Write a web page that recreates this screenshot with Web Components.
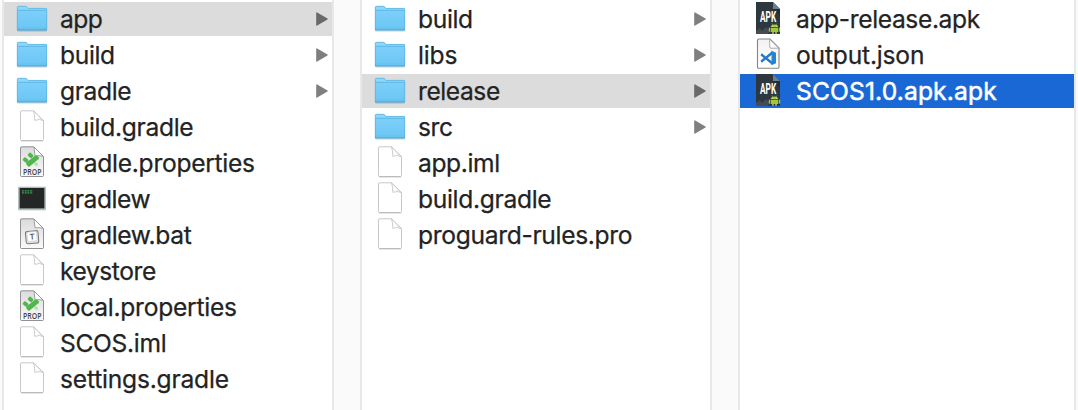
<!DOCTYPE html>
<html lang="en"><head><meta charset="utf-8"><title>Files</title>
<style>body{margin:0;background:#fafafa;height:410px;overflow:hidden}</style></head>
<body>
<file-browser>
<file-column style="width:328px">
<file-row icon="folder" state="parent" arrow w="42">app</file-row>
<file-row icon="folder" arrow w="54.5">build</file-row>
<file-row icon="folder" arrow w="71">gradle</file-row>
<file-row icon="doc" w="133">build.gradle</file-row>
<file-row icon="prop" w="194.5">gradle.properties</file-row>
<file-row icon="term" w="90">gradlew</file-row>
<file-row icon="bat" w="131">gradlew.bat</file-row>
<file-row icon="doc" w="95.5">keystore</file-row>
<file-row icon="prop" w="176.5">local.properties</file-row>
<file-row icon="doc" w="106">SCOS.iml</file-row>
<file-row icon="doc" w="168.5">settings.gradle</file-row>
</file-column>
<file-column style="width:348px">
<file-row icon="folder" arrow w="54.5">build</file-row>
<file-row icon="folder" arrow w="39">libs</file-row>
<file-row icon="folder" state="parent" arrow w="81.5">release</file-row>
<file-row icon="folder" arrow w="34.5">src</file-row>
<file-row icon="doc" w="81.5">app.iml</file-row>
<file-row icon="doc" w="133">build.gradle</file-row>
<file-row icon="doc" w="214">proguard-rules.pro</file-row>
</file-column>
<file-column style="width:334px">
<file-row icon="apk" w="183.5">app-release.apk</file-row>
<file-row icon="code" w="128">output.json</file-row>
<file-row icon="apk" state="selected" w="200.5">SCOS1.0.apk.apk</file-row>
</file-column>
</file-browser>
<script>
const page = '<path d="M4.5 2Q4.5.8 5.7.8H17.5L27.5 10.5V29.5Q27.5 30.5 26.5 30.5H5.5Q4.5 30.5 4.5 29.5Z"';
const ICONS = {
folder: `<defs><linearGradient id="g" x2="0" y2="1"><stop stop-color="#7ccffa"/><stop offset="1" stop-color="#6bc5f3"/></linearGradient></defs>
<path d="M1.5 29H30.5" stroke="#000" stroke-opacity=".2" stroke-width="1"/>
<path d="M1 5.5Q1 4 2.5 4H9.3Q10.3 4 11 5L12 6H29.8Q31 6 31 7.2V28H1Z" fill="#8dd7fb"/>
<path d="M1 9H31V28.2H1Z" fill="url(#g)"/>
<path d="M1.3 28V5.5Q1.3 4.3 2.5 4.3H9.3Q10.3 4.3 11 5.3L12 6.4H29.8Q30.7 6.4 30.7 7.2V28" fill="none" stroke="#58afdc" stroke-width=".7"/>
<path d="M1.5 8.3H30.5" stroke="#5cb6e4"/><path d="M2 26H30" stroke="#61bcea" stroke-width=".6"/><path d="M1 28H31" stroke="#4b9fcb"/>`,
doc: `<defs><linearGradient id="g" x1="0" y1="0" x2="1" y2="0"><stop offset=".4" stop-color="#fff"/><stop offset="1" stop-color="#e9e9e9"/></linearGradient></defs>
${page} fill="#fff" stroke="#c2c2c2" stroke-width=".9"/><path d="M5 30.9H27" stroke="#aaa" stroke-width=".7"/>
<path d="M17.5 1L27.3 10.6Q24 8.6 18.8 10.3Q18.8 4 17.5 1Z" fill="url(#g)" stroke="#c0c0c0" stroke-width=".8"/>`,
prop: `<defs><linearGradient id="g" x2="0" y2="1"><stop stop-color="#dcdcdc"/><stop offset="1" stop-color="#fafafa"/></linearGradient></defs>
${page} fill="url(#g)" stroke="#858585" stroke-width=".9"/>
<g fill="#50b74d"><rect x="-7" y="-2.5" width="14" height="5" rx="1.2" transform="translate(16.6 14.8) rotate(-39)"/><rect x="-2.6" y="-2" width="5.2" height="4" rx="1" transform="translate(14.6 9.4) rotate(40)"/><rect x="-2.6" y="-2" width="5.2" height="4" rx="1" transform="translate(9.6 14) rotate(40)"/></g><rect x="-2.2" y="-1.5" width="4.4" height="3" rx="1" fill="#b9dfb8" transform="translate(20 18) rotate(40)"/>
<path d="M18 1L27.3 10.3Q24 9.4 19 9.7Z" fill="#fff" stroke="#888" stroke-width=".8"/>
<text x="7" y="28.5" textLength="18.4" lengthAdjust="spacingAndGlyphs" font-family="Open Sans,sans-serif" font-size="8.4" font-weight="600" fill="#444">PROP</text>`,
term: `<rect x="2.2" y="4.8" width="27.6" height="23.5" rx="1" fill="#9ca6a6"/><rect x="3.2" y="5.5" width="25.6" height="21" fill="#252727"/>
<path d="M3 5.5H29M3.1 6V27M28.9 6V27M3 27.2H29" stroke="#c6d2d2" stroke-width=".8"/>
<path d="M6 8.8H17M6 10.8H17" stroke="#35a954" stroke-width="1.3" stroke-dasharray="1.8 .9"/>`,
bat: `<defs><linearGradient id="g" x2="0" y2="1"><stop stop-color="#dadada"/><stop offset="1" stop-color="#fafafa"/></linearGradient></defs>
${page} fill="url(#g)" stroke="#858585" stroke-width=".9"/>
<path d="M18 1L27.3 10.3Q24 9.4 19 9.7Z" fill="#fff" stroke="#888" stroke-width=".8"/>
<g transform="rotate(-5 16 19)"><rect x="9.8" y="13" width="12.6" height="12.5" rx="2" fill="#e6e6e6" stroke="#777"/><rect x="11.3" y="13.8" width="9.6" height="9.4" rx="1.5" fill="#fff" stroke="#bbb" stroke-width=".5"/>
<text x="16.1" y="21.5" text-anchor="middle" font-family="Inter,sans-serif" font-size="8" font-weight="600" fill="#555">T</text></g>`,
apk: `<path d="M4 0H21L28 7V32H4Z" fill="#2e363e"/><path d="M21 0L28 7H21Z" fill="#6d8090"/><path d="M21 7H28V14Z" fill="#252c33"/>
<path d="M4 29L8 26L10 29L14 25L18 29L16 32H4Z" fill="#454c53"/>
<text x="8" y="20.3" textLength="16.2" lengthAdjust="spacingAndGlyphs" font-family="Roboto,sans-serif" font-size="13.8" font-weight="700" fill="#fff">APK</text>
<g fill="#a4c639"><path d="M18.7 25.1Q18.9 22.5 22.5 22.5T26.3 25.1ZM18.7 25.8H26.3V30H24.8V32H23.3V30H21.7V32H20.2V30H18.7Z"/><rect x="16.8" y="25.5" width="1.2" height="4.2" rx=".6"/><rect x="27" y="25.5" width="1.2" height="4.2" rx=".6"/><path d="M20 21.5L21 23M25 21.5L24 23" stroke="#a4c639" stroke-width=".6"/></g><path d="M20.5 24.1h.8M23.8 24.1h.8" stroke="#fff" stroke-width=".8"/>`,
code: `<defs><linearGradient id="g" x2="0" y2="1"><stop stop-color="#f2f2f2"/><stop offset="1" stop-color="#fff"/></linearGradient></defs>
<path d="M5.5 2.2Q5.5 1 6.7 1H18L27 10V29Q27 30.3 25.7 30.3H6.8Q5.5 30.3 5.5 29Z" fill="url(#g)" stroke="#858585" stroke-width="1.1"/>
<path d="M17.7 1.3V9Q17.7 10.2 19 10.2H26.8Z" fill="#fff" stroke="#999" stroke-width=".8"/>
<path d="M9.2 16.3L20.8 25.8M9.2 23.7L20.8 14.2" stroke="#2179c8" stroke-width="2.4" fill="none"/><path d="M19.5 12.7L24 14.7V25.2L19.5 27.2Z" fill="#2484d6"/>`
};
customElements.define('file-icon', class extends HTMLElement {
  connectedCallback(){
    this.attachShadow({mode:'open'}).innerHTML = `<style>:host{display:block;width:32px;height:34px}svg{display:block}</style><svg width="32" height="34" viewBox="0 0 32 34">${ICONS[this.getAttribute('name')]}</svg>`;
  }
});
customElements.define('file-row', class extends HTMLElement {
  connectedCallback(){
    const root = this.attachShadow({mode:'open'});
    root.innerHTML = `<style>
:host{display:flex;align-items:center;height:34px;padding:0 4px 0 12px;color:#232323;font:24.6px/34px Inter,"Liberation Sans",sans-serif;white-space:nowrap;-webkit-text-stroke:.25px currentColor}
:host([state=parent]){background:#dcdcdc}
:host([state=selected]){background:#1a68d6;color:#fff;-webkit-text-stroke-width:.5px}
file-icon{-webkit-text-stroke:0}
.name{margin-left:12px}.arrow{margin-left:auto;fill:#7f7f7f}
:host([state=parent]) .arrow{fill:#696969}
</style><file-icon name="${this.getAttribute('icon')}"></file-icon><span class="name"><slot></slot></span>
${this.hasAttribute('arrow') ? '<svg class="arrow" width="12" height="14" viewBox="0 0 12 14"><path d="M.2 1Q.2 0 1.2.4L11.5 6.5Q12 7 11.5 7.5L1.2 13.6Q.2 14 .2 13Z"/></svg>' : ''}`;
    const name = root.querySelector('.name'), want = +this.getAttribute('w');
    requestAnimationFrame(() => {
      const n = this.textContent.length;
      name.style.letterSpacing = (want + .3 - name.getBoundingClientRect().width) / n + 'px';
    });
  }
});
customElements.define('file-column', class extends HTMLElement {
  connectedCallback(){
    this.attachShadow({mode:'open'}).innerHTML = `<style>:host{display:flex;flex-direction:column;gap:2px;padding-top:2px;background:#fff;border:solid #e8e8e8;border-width:0 2px;flex:none}</style><slot></slot>`;
  }
});
customElements.define('file-browser', class extends HTMLElement {
  connectedCallback(){
    this.attachShadow({mode:'open'}).innerHTML = `<style>:host{display:flex;gap:26px;height:410px;padding-left:2px}</style><slot></slot>`;
  }
});
</script>
</body></html>
